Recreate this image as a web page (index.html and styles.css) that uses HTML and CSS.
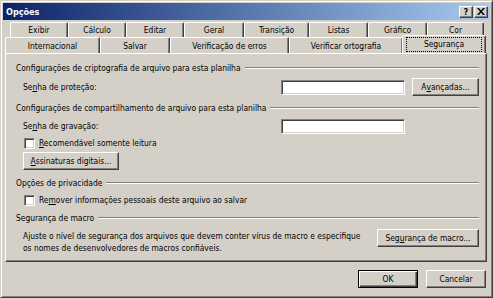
FILE: index.html
```html
<!DOCTYPE html>
<html lang="pt">
  <head>
    <meta charset="utf-8" />
    <title>Opções</title>
    <link rel="stylesheet" href="styles.css">
  </head>
  <body>
    <div class="window">
      <div class="titlebar">
        <span class="title">Opções</span>
        <span class="caption-btns">
          <span class="cap-btn">?</span>
          <span class="cap-btn">
            <svg width="8" height="7" viewBox="0 0 8 7"><path d="M0 0h2l2 2.4 2-2.4h2l-3 3.5 3 3.5h-2l-2-2.4-2 2.4h-2l3-3.5z" fill="#000"/></svg>
          </span>
        </span>
      </div>

      <div class="tabrow back">
        <div class="tab w58">Exibir</div>
        <div class="tab w58">Cálculo</div>
        <div class="tab w58">Editar</div>
        <div class="tab w60">Geral</div>
        <div class="tab w65">Transição</div>
        <div class="tab w59">Listas</div>
        <div class="tab w59">Gráfico</div>
        <div class="tab w57">Cor</div>
      </div>
      <div class="tabrow front">
        <div class="tab w95">Internacional</div>
        <div class="tab w70">Salvar</div>
        <div class="tab w119">Verificação de erros</div>
        <div class="tab w114">Verificar ortografia</div>
        <div class="tab active"><span class="focus">Segurança</span></div>
      </div>

      <div class="panel">
        <div class="group-title g1"><span>Configurações de criptografia de arquivo para esta planilha</span><i></i></div>
        <div class="row r1">
          <span class="label">Se<u>n</u>ha de proteção:</span>
          <span class="input"></span>
          <span class="btn adv">A<u>v</u>ançadas...</span>
        </div>

        <div class="group-title g2"><span>Configurações de compartilhamento de arquivo para esta planilha</span><i></i></div>
        <div class="row r2">
          <span class="label">Se<u>n</u>ha de gravação:</span>
          <span class="input"></span>
          <span class="spacer"></span>
        </div>
        <div class="check c1"><span class="box"></span><span><u>R</u>ecomendável somente leitura</span></div>
        <div class="btn sign"><u>A</u>ssinaturas digitais...</div>

        <div class="group-title g3"><span>Opções de privacidade</span><i></i></div>
        <div class="check c2"><span class="box"></span><span>Re<u>m</u>over informações pessoais deste arquivo ao salvar</span></div>

        <div class="group-title g4"><span>Segurança de macro</span><i></i></div>
        <div class="macro">
          <p>Ajuste o nível de segurança dos arquivos que devem conter vírus de macro e especifique os nomes de desenvolvedores de macros confiáveis.</p>
          <span class="btn macro-btn">Seg<u>u</u>rança de macro...</span>
        </div>
      </div>

      <div class="actions">
        <span class="btn default">OK</span>
        <span class="btn">Cancelar</span>
      </div>
    </div>
  </body>
</html>
```

FILE: styles.css
```css
* {
  box-sizing: border-box;
}

body {
  margin: 0;
  background: #d4d0c8;
  color: #000;
  font: 8.4px "DejaVu Sans Condensed", "DejaVu Sans", sans-serif;
}

u {
  text-decoration: underline;
}

.window {
  width: 493px;
  height: 298px;
  padding: 2px;
  display: flex;
  flex-direction: column;
  background: #d4d0c8;
  border: 1px solid;
  border-color: #d4d0c8 #404040 #404040 #d4d0c8;
  box-shadow: inset 1px 1px #fff, inset -1px -1px #808080;
}

/* title bar */
.titlebar {
  height: 17px;
  flex-shrink: 0;
  padding: 0 2px 0 3px;
  display: flex;
  align-items: center;
  justify-content: space-between;
  background: linear-gradient(to right, #0a246a, #a6caf0);
  color: #fff;
}

.title {
  font-weight: bold;
  font-size: 9px;
}

.caption-btns {
  display: flex;
  gap: 1px;
}

.cap-btn {
  width: 14px;
  height: 12px;
  display: flex;
  align-items: center;
  justify-content: center;
  background: #d4d0c8;
  color: #000;
  font-weight: bold;
  border: 1px solid;
  border-color: #fff #404040 #404040 #fff;
  box-shadow: inset -1px -1px #808080;
}

/* tabs */
.tabrow {
  display: flex;
  flex-shrink: 0;
}

.tabrow.back {
  margin: 2px 0 0 7px;
  height: 15px;
}

.tabrow.front {
  margin-left: 2px;
  height: 16px;
}

.tab {
  display: flex;
  align-items: center;
  justify-content: center;
  border-top: 1px solid #fff;
  border-left: 1px solid #fff;
  border-right: 1px solid #404040;
  border-radius: 2px 2px 0 0;
  box-shadow: inset -1px 0 #808080;
  white-space: nowrap;
}

.w57 { width: 57px; }
.w58 { width: 58px; }
.w59 { width: 59px; }
.w60 { width: 60px; }
.w65 { width: 65px; }
.w70 { width: 70px; }
.w95 { width: 95px; }
.w114 { width: 114px; }
.w119 { width: 119px; }

.tab.active {
  width: 84px;
  height: 18px;
  margin: -2px 0 -1px -1px;
  position: relative;
  z-index: 1;
  background: #d4d0c8;
}

.focus {
  padding: 1px 4px;
  outline: 1px dotted #000;
  outline-offset: 0;
  line-height: 11px;
  width: 74px;
  text-align: center;
}

/* panel */
.panel {
  height: 209px;
  flex-shrink: 0;
  margin: 0 3px 0 2px;
  padding: 8px 7px 0 10px;
  border: 1px solid;
  border-color: #fff #404040 #404040 #fff;
  box-shadow: inset -1px -1px #808080;
  display: flex;
  flex-direction: column;
}

.group-title {
  height: 12px;
  display: flex;
  align-items: center;
  white-space: nowrap;
}

.group-title i {
  flex: 1;
  height: 2px;
  margin-left: 4px;
  border-top: 1px solid #808080;
  border-bottom: 1px solid #fff;
}

.g2 { margin-top: 6px; }
.g3 { margin-top: 7px; }
.g4 { margin-top: 6px; }

.row {
  height: 18px;
  display: flex;
  align-items: center;
  padding-left: 7px;
}

.r1 { margin-top: 4px; }
.r2 { margin-top: 3px; }

.label {
  flex: 1;
}

.input {
  width: 124px;
  height: 15px;
  background: #fff;
  border: 1px solid;
  border-color: #808080 #fff #fff #808080;
  box-shadow: inset 1px 1px #404040, inset -1px -1px #d4d0c8;
}

.spacer {
  width: 74px;
}

.btn {
  height: 18px;
  display: flex;
  align-items: center;
  justify-content: center;
  background: #d4d0c8;
  border: 1px solid;
  border-color: #fff #404040 #404040 #fff;
  box-shadow: inset -1px -1px #808080;
  white-space: nowrap;
}

.adv {
  width: 67px;
  margin-left: 7px;
}

.check {
  height: 12px;
  display: flex;
  align-items: center;
  gap: 4px;
  padding-left: 8px;
}

.c1 { margin-top: 2px; }
.c2 { margin-top: 5px; }

.box {
  width: 11px;
  height: 11px;
  background: #fff;
  border: 1px solid;
  border-color: #808080 #fff #fff #808080;
  box-shadow: inset 1px 1px #404040, inset -1px -1px #d4d0c8;
}

.sign {
  width: 96px;
  margin: 3px 0 0 7px;
}

.macro {
  margin-top: 5px;
  padding-left: 7px;
  display: flex;
  justify-content: space-between;
  align-items: flex-start;
}

.macro p {
  margin: 1px 0 0;
  width: 345px;
  line-height: 12px;
}

.macro-btn {
  width: 102px;
}

/* dialog buttons */
.actions {
  margin-top: 8px;
  padding-right: 4px;
  display: flex;
  justify-content: flex-end;
  gap: 8px;
}

.actions .btn {
  width: 60px;
}

.actions .default {
  border-color: #000;
  box-shadow: inset 1px 1px #fff, inset -1px -1px #404040, inset -2px -2px #808080;
}
```
